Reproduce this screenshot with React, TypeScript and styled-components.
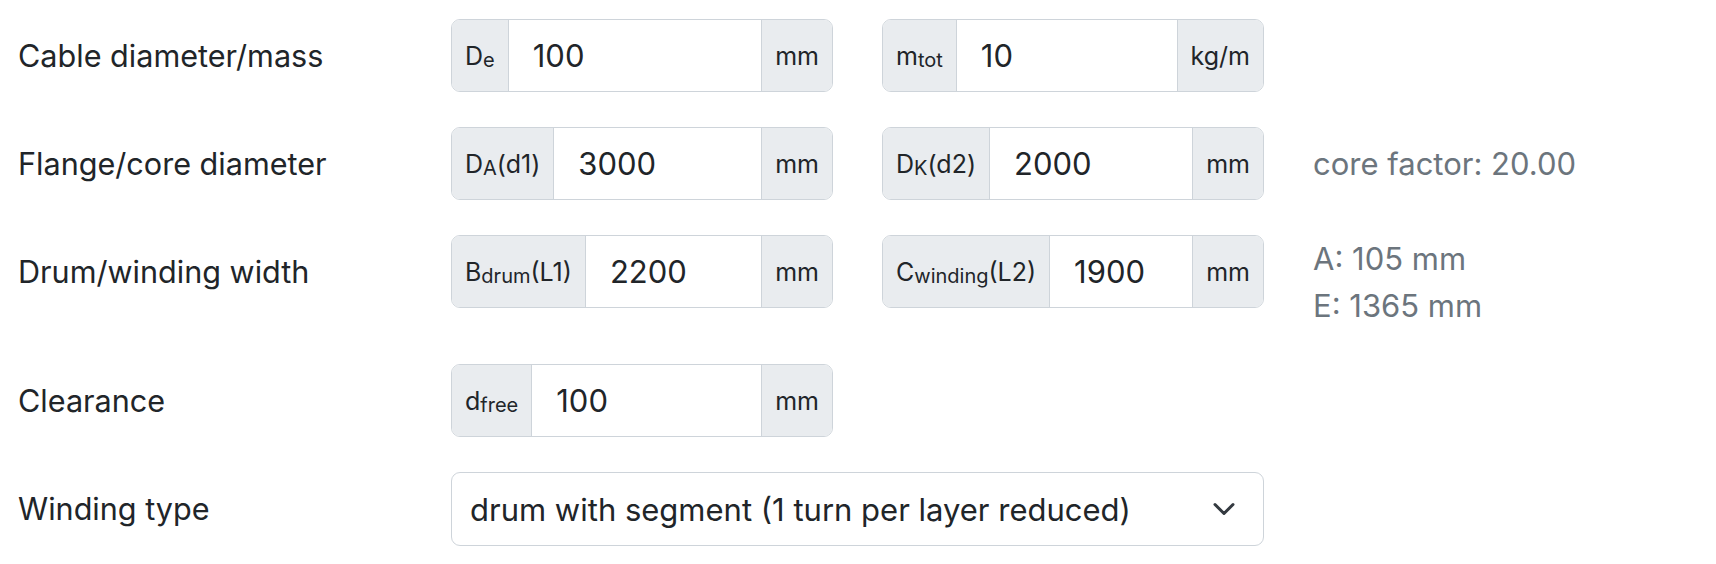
import React from 'react'
import styled, { createGlobalStyle } from 'styled-components'

const GlobalStyle = createGlobalStyle`
  * { box-sizing: border-box; }
  body {
    margin: 0;
    background: #ffffff;
    color: #212529;
    font-family: Inter, "Noto Sans", sans-serif;
  }
`

const Form = styled.div`
  padding: 19px 0 0 18px;
`

const FormRow = styled.div`
  display: grid;
  grid-template-columns: 384px 382px 382px 1fr;
  column-gap: 49px;
  align-items: start;
  margin-bottom: 35px;
`

const Label = styled.div`
  font-size: 30.6px;
  line-height: 73px;
`

const Group = styled.div`
  display: flex;
  height: 73px;
  border: 1px solid #ced4da;
  border-radius: 9px;
  overflow: hidden;
  background: #ffffff;
`

const Addon = styled.span<{ $side: 'start' | 'end' }>`
  display: flex;
  align-items: center;
  padding: 0 13px;
  background: #e9ecef;
  font-size: 25px;
  white-space: nowrap;
  ${p => (p.$side === 'start' ? 'border-right: 1px solid #ced4da;' : 'border-left: 1px solid #ced4da;')}
`

const Sub = styled.sub`
  font-size: 0.8em;
  line-height: 0;
  position: relative;
  bottom: -0.22em;
  vertical-align: baseline;
`

const Input = styled.input`
  flex: 1;
  min-width: 0;
  border: none;
  outline: none;
  padding: 0 24px;
  font-family: inherit;
  font-size: 31px;
  color: #212529;
  background: transparent;
`

const Notes = styled.div`
  display: flex;
  flex-direction: column;
  justify-content: center;
  min-height: 73px;
  color: #6c757d;
  font-size: 31px;
  line-height: 47px;
`

const SelectWrap = styled.div`
  grid-column: 2 / 4;
  position: relative;
`

const Select = styled.select`
  appearance: none;
  width: 100%;
  height: 74px;
  border: 1px solid #ced4da;
  border-radius: 9px;
  background: #ffffff;
  padding: 0 70px 0 18px;
  font-family: inherit;
  font-size: 31px;
  color: #212529;
  outline: none;
`

const Chevron = styled.svg`
  position: absolute;
  right: 28px;
  top: 25px;
  width: 24px;
  height: 24px;
  pointer-events: none;
`

type Field = { sym: string; sub: string; after?: string; value: string; unit: string }
type Row = { label: string; fields: Field[]; notes?: string[] }

const rows: Row[] = [
  {
    label: 'Cable diameter/mass',
    fields: [
      { sym: 'D', sub: 'e', value: '100', unit: 'mm' },
      { sym: 'm', sub: 'tot', value: '10', unit: 'kg/m' },
    ],
  },
  {
    label: 'Flange/core diameter',
    fields: [
      { sym: 'D', sub: 'A', after: '(d1)', value: '3000', unit: 'mm' },
      { sym: 'D', sub: 'K', after: '(d2)', value: '2000', unit: 'mm' },
    ],
    notes: ['core factor: 20.00'],
  },
  {
    label: 'Drum/winding width',
    fields: [
      { sym: 'B', sub: 'drum', after: '(L1)', value: '2200', unit: 'mm' },
      { sym: 'C', sub: 'winding', after: '(L2)', value: '1900', unit: 'mm' },
    ],
    notes: ['A: 105 mm', 'E: 1365 mm'],
  },
  {
    label: 'Clearance',
    fields: [{ sym: 'd', sub: 'free', value: '100', unit: 'mm' }],
  },
]

const UnitField = ({ f }: { f: Field }) => (
  <Group>
    <Addon $side="start">
      {f.sym}
      <Sub>{f.sub}</Sub>
      {f.after}
    </Addon>
    <Input defaultValue={f.value} />
    <Addon $side="end">{f.unit}</Addon>
  </Group>
)

const App = () => {
  return (
    <>
      <GlobalStyle />
      <Form>
        {rows.map(r => (
          <FormRow key={r.label}>
            <Label>{r.label}</Label>
            {r.fields.map(f => (
              <UnitField key={f.sym + f.sub} f={f} />
            ))}
            {r.notes && (
              <Notes>
                {r.notes.map(n => (
                  <div key={n}>{n}</div>
                ))}
              </Notes>
            )}
          </FormRow>
        ))}
        <FormRow>
          <Label>Winding type</Label>
          <SelectWrap>
            <Select defaultValue="segment">
              <option value="segment">drum with segment (1 turn per layer reduced)</option>
              <option value="plain">drum without segment</option>
            </Select>
            <Chevron viewBox="0 0 16 16">
              <path d="m2 5 6 6 6-6" fill="none" stroke="#343a40" strokeWidth="2" strokeLinecap="round" strokeLinejoin="round" />
            </Chevron>
          </SelectWrap>
        </FormRow>
      </Form>
    </>
  )
}

export default App
